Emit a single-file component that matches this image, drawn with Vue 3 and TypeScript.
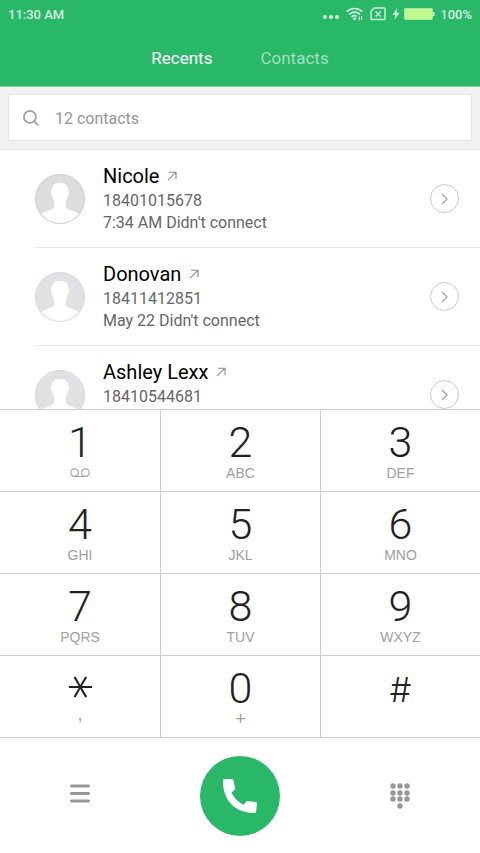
<script setup lang="ts">
interface Call {
  name: string
  phone: string
  note: string
  cool?: boolean
}

interface Key {
  main: string
  sub: string
  kind?: string
}

const calls: Call[] = [
  { name: 'Nicole', phone: '18401015678', note: "7:34 AM Didn't connect" },
  { name: 'Donovan', phone: '18411412851', note: "May 22 Didn't connect", cool: true },
  { name: 'Ashley Lexx', phone: '18410544681', note: '', cool: true },
]

const keys: Key[] = [
  { main: '1', sub: '', kind: 'voicemail' },
  { main: '2', sub: 'ABC' },
  { main: '3', sub: 'DEF' },
  { main: '4', sub: 'GHI' },
  { main: '5', sub: 'JKL' },
  { main: '6', sub: 'MNO' },
  { main: '7', sub: 'PQRS' },
  { main: '8', sub: 'TUV' },
  { main: '9', sub: 'WXYZ' },
  { main: '*', sub: ',', kind: 'star' },
  { main: '0', sub: '+', kind: 'zero' },
  { main: '#', sub: '', kind: 'hash' },
]

const dots: [number, number][] = [
  [3, 3], [10, 3], [17, 3],
  [3, 10], [10, 10], [17, 10],
  [3, 16], [10, 16], [17, 16],
  [10, 23],
]
</script>

<template>
  <div class="phone">
    <header class="top">
      <div class="status">
        <span>11:30 AM</span>
        <div class="status-icons">
          <svg class="more" width="16" height="14" viewBox="0 0 16 14" fill="currentColor">
            <circle cx="2" cy="10" r="2" /><circle cx="8" cy="10" r="2" /><circle cx="14" cy="10" r="2" />
          </svg>
          <svg class="wifi" width="18" height="14" viewBox="0 0 18 14" fill="none" stroke="currentColor" stroke-width="1.7">
            <path d="M.8 4.6a11.3 11.3 0 0 1 15.6 0M3.2 7.3a7.8 7.8 0 0 1 10.8 0M5.6 9.8a4.4 4.4 0 0 1 5 -.6" />
            <path d="M6.7 11.3a2.8 2.8 0 0 1 3.8 0L8.6 13.4z" fill="currentColor" stroke="none" />
            <path d="M13.3 13.4V9.4M15.6 9v4" stroke-width="1.2" />
          </svg>
          <svg class="sim" width="16" height="14" viewBox="0 0 16 14" fill="none" stroke="currentColor" stroke-width="1.4">
            <path d="M4.2 1H14.2Q15 1 15 1.8V11.7Q15 12.5 14.2 12.5H1.8Q1 12.5 1 11.7V4.2z" />
            <path d="M5.6 4.4l5 5M10.6 4.4l-5 5" />
          </svg>
          <svg class="bolt" width="8" height="14" viewBox="0 0 8 14" fill="currentColor">
            <path d="M5.3 1L.5 7.8H3.4L2.3 13L7.6 5.8H4.6z" />
          </svg>
          <svg class="battery" width="31" height="12" viewBox="0 0 31 12">
            <rect x=".5" y=".5" width="28" height="11" rx="1" fill="#c1f98d" stroke="#a5e6a7" />
            <path d="M29 4h1.5v4H29z" fill="#d4f1e1" />
          </svg>
          <span>100%</span>
        </div>
      </div>
      <nav class="tabs">
        <a href="#recents" class="tab active">Recents</a>
        <a href="#contacts" class="tab">Contacts</a>
      </nav>
    </header>

    <div class="search">
      <label class="search-box">
        <svg width="16" height="16" viewBox="0 0 16 16" fill="none" stroke="#a0a0a0" stroke-width="1.7">
          <circle cx="6.9" cy="6.9" r="6" /><path d="M11 11L15.4 15.4" />
        </svg>
        <input type="search" placeholder="12 contacts" aria-label="Search contacts" />
      </label>
    </div>

    <ul class="calls">
      <li v-for="call in calls" :key="call.phone" class="call">
        <svg class="avatar" :class="{ cool: call.cool }" width="50" height="50" viewBox="0 0 50 50">
          <circle class="disc" cx="25" cy="25" r="25" />
          <path fill="#fff" d="M25 8.7C30.5 8.7 33.3 12 33.2 16.3C34.7 16.7 34.3 21.5 32.7 22.3C32.3 24.3 31.8 25.6 31 26.7V32.500C31.2 34.3 32.5 34.9 34 35.5C38.5 37.2 42 38.5 44.3 40.3A24.5 24.5 0 0 1 5.7 40.3C8 38.5 11.5 37.2 16 35.5C17.5 34.9 18.8 34.3 19 32.5V26.7C18.2 25.6 17.7 24.3 17.3 22.3C15.7 21.5 15.3 16.7 16.8 16.3C16.7 12 19.5 8.7 25 8.7z" />
          <circle class="ring" cx="25" cy="25" r="24.5" fill="none" />
        </svg>
        <div class="info">
          <div class="name">
            <span>{{ call.name }}</span>
            <svg width="10" height="10" viewBox="0 0 10 10" fill="none" stroke="#8c8c8c" stroke-width="1.1">
              <path d="M2 1.2h7v7M9 1.2L1 9.2" />
            </svg>
          </div>
          <div class="line">{{ call.phone }}</div>
          <div class="line">{{ call.note }}</div>
        </div>
        <button class="detail" type="button" :aria-label="`Details for ${call.name}`">
          <svg width="7" height="12" viewBox="0 0 7 12" fill="none" stroke="#9a9a9a" stroke-width="1.1">
            <path d="M1 1l5 5-5 5" />
          </svg>
        </button>
      </li>
    </ul>

    <div class="keypad">
      <button v-for="key in keys" :key="key.main" class="key" :class="key.kind" type="button">
        <span class="main">{{ key.main }}</span>
        <span v-if="key.kind === 'voicemail'" class="sub">
          <svg width="20" height="10" viewBox="0 0 20 10" fill="none" stroke="#a6a6a6" stroke-width="1.2">
            <circle cx="4.6" cy="4.6" r="3.8" /><circle cx="15.4" cy="4.6" r="3.8" /><path d="M4.6 8.5H15.4" />
          </svg>
        </span>
        <span v-else-if="key.sub" class="sub">{{ key.sub }}</span>
      </button>
    </div>

    <footer class="actions">
      <button class="action" type="button" aria-label="Menu">
        <svg width="22" height="26" viewBox="0 0 22 26" stroke="#979797" stroke-width="3" stroke-linecap="round">
          <path d="M2.5 3H19.5M2.5 10.5H19.5M2.5 18H19.5" />
        </svg>
      </button>
      <button class="dial" type="button" aria-label="Call">
        <svg width="34" height="34" viewBox="0 0 34 34" fill="#fff">
          <path d="M1.3 0H9.2Q10.2 0 10.4 1L12.3 10L8.4 13.7C11.5 19.5 15.5 23.2 20.7 25.8L23.7 22L33 23.1Q34 23.3 34 24.3L33.1 32.7Q32.900 34 31.5 34C12 34.3 -.5 21 0 1.3Q.1 0 1.3 0z" />
        </svg>
      </button>
      <button class="action" type="button" aria-label="Hide keypad">
        <svg width="20" height="26" viewBox="0 0 20 26" fill="#979797">
          <circle v-for="[x, y] in dots" :key="`${x}-${y}`" :cx="x" :cy="y" r="2.7" />
        </svg>
      </button>
    </footer>
  </div>
</template>

<style>
body {
  margin: 0;
  background: #fff;
}
</style>

<style scoped>
.phone {
  display: flex;
  flex-direction: column;
  height: 100vh;
  overflow: hidden;
  background: #fff;
  font-family: Roboto, "Liberation Sans", sans-serif;
}

button {
  padding: 0;
  border: 0;
  background: none;
  font: inherit;
}

svg {
  display: block;
  flex: none;
}

.top {
  flex: none;
  background: #29b768;
}

.status {
  display: flex;
  align-items: center;
  justify-content: space-between;
  height: 28px;
  padding: 0 8px;
  color: #d4f1e1;
  font-size: 13px;
  font-weight: 500;
}

.status-icons {
  display: flex;
  align-items: center;
}

.more {
  margin-right: 7px;
}

.wifi {
  margin-right: 6px;
}

.sim {
  margin-right: 6px;
}

.battery {
  margin: 0 5px 0 4px;
}

.tabs {
  display: flex;
  justify-content: center;
  gap: 48px;
  height: 58px;
  line-height: 60px;
  border-bottom: 1px solid #7fd3a4;
}

.tab {
  color: #a4dfbf;
  font-size: 17px;
  text-decoration: none;
}

.tab.active {
  color: #fff;
}

.search {
  flex: none;
  padding: 7px 8px 8px;
  background: #f1f1f1;
  border-bottom: 1px solid #e6e6e6;
}

.search-box {
  display: flex;
  align-items: center;
  gap: 16px;
  height: 45px;
  padding: 0 14px;
  border: 1px solid #e6e6e6;
  background: #fff;
}

.search-box input {
  flex: 1;
  min-width: 0;
  padding: 2px 0 0;
  border: 0;
  outline: 0;
  background: none;
  font: inherit;
  font-size: 16px;
}

.search-box input::placeholder {
  color: #959595;
  opacity: 1;
}

.calls {
  flex: 1;
  min-height: 0;
  margin: 0;
  padding: 0;
  overflow: hidden;
  list-style: none;
}

.call {
  display: flex;
  box-sizing: border-box;
  align-items: center;
  height: 98px;
  margin-left: 35px;
  padding-right: 21px;
  border-bottom: 1px solid #e8e8e8;
}

.disc {
  fill: #dddddd;
}

.ring {
  stroke: #cfcfcf;
}

.cool .disc {
  fill: #dfe1e4;
}

.cool .ring {
  stroke: #d9dcdf;
}

.info {
  flex: 1;
  min-width: 0;
  padding-left: 18px;
}

.name {
  display: flex;
  align-items: center;
  gap: 8px;
  padding-bottom: 2px;
  color: #000;
  font-size: 20px;
  line-height: 24px;
}

.line {
  height: 22px;
  color: #666;
  font-size: 16px;
  line-height: 22px;
}

.detail {
  display: flex;
  align-items: center;
  justify-content: center;
  width: 29px;
  height: 29px;
  border: 1px solid #c9c9c9;
  border-radius: 50%;
}

.keypad {
  display: grid;
  flex: none;
  grid-template-columns: repeat(3, 1fr);
  border-top: 1px solid #cdcdcd;
}

.key {
  display: flex;
  box-sizing: border-box;
  flex-direction: column;
  align-items: center;
  justify-content: flex-start;
  height: 82px;
  padding-top: 8px;
  border-left: 1px solid #cdcdcd;
  border-bottom: 1px solid #cdcdcd;
}

.key:nth-child(3n + 1) {
  border-left: 0;
}

.main {
  height: 46px;
  color: #222;
  font-family: Roboto, sans-serif;
  font-size: 43px;
  font-weight: 300;
  line-height: 48px;
}

.sub {
  height: 18px;
  color: #a0a0a0;
  font-family: "Liberation Sans", sans-serif;
  font-size: 14px;
  line-height: 18px;
}

.voicemail .sub {
  padding-top: 4px;
}

.star .main {
  font-family: Inter, sans-serif;
  font-size: 56px;
  font-weight: 200;
  line-height: 64px;
  transform: rotate(90deg);
}

.hash .main {
  font-family: Inter, sans-serif;
  font-size: 34px;
  line-height: 52px;
}

.star .sub,
.zero .sub {
  font-size: 18px;
}

.star .sub {
  line-height: 8px;
}

.actions {
  display: grid;
  flex: none;
  grid-template-columns: repeat(3, 1fr);
  place-items: center;
  height: 115px;
}

.action {
  padding: 10px;
}

.dial {
  display: flex;
  align-items: center;
  justify-content: center;
  width: 80px;
  height: 80px;
  border-radius: 50%;
  background: #29b768;
}
</style>
